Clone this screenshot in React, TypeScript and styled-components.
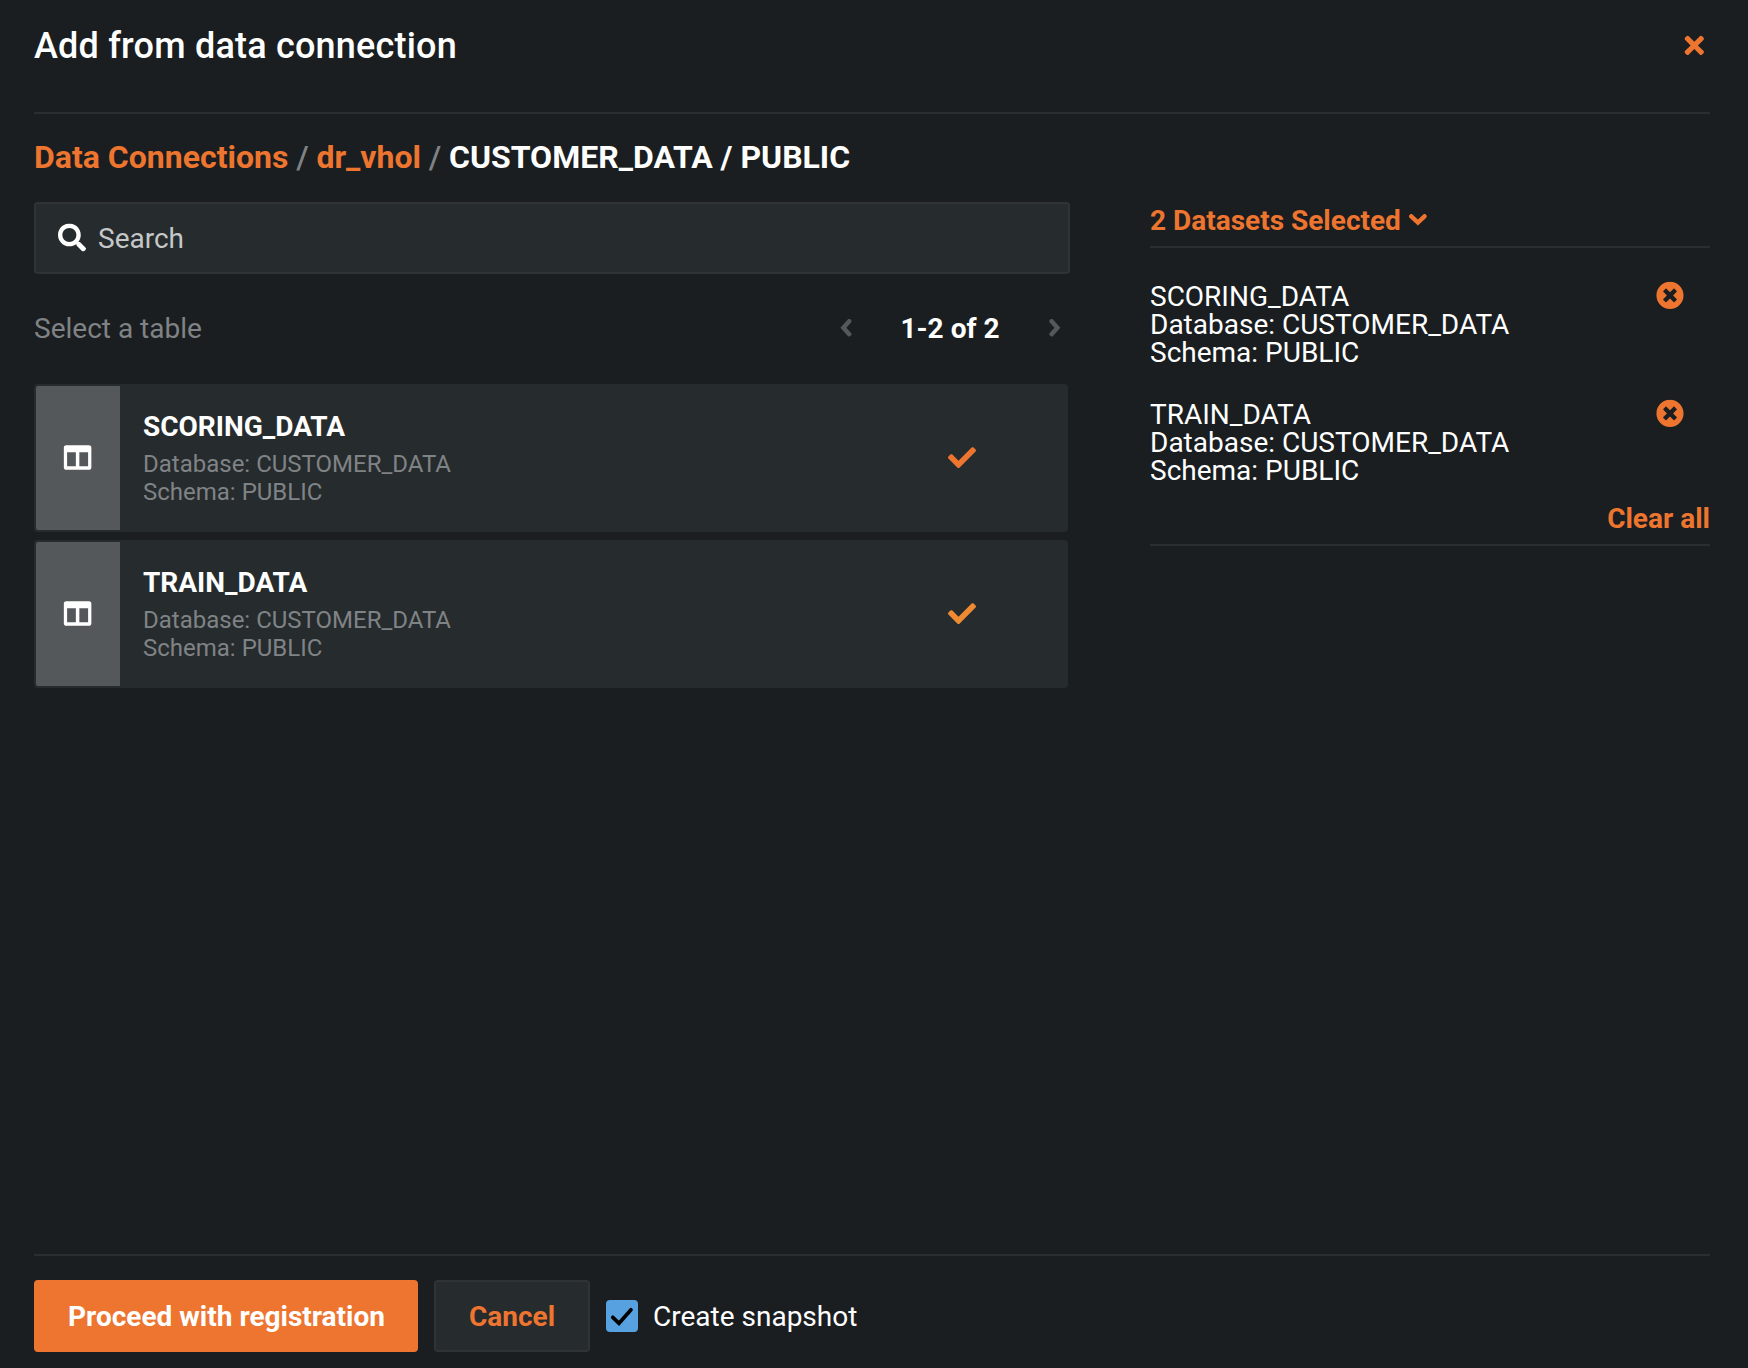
import React from 'react';
import styled, { createGlobalStyle } from 'styled-components';
import { FaCheck, FaColumns, FaSearch, FaTimes, FaTimesCircle } from 'react-icons/fa';

const color = {
  page: '#1a1e20',
  panel: '#262b2e',
  border: '#2f3335',
  rule: '#292e31',
  thumb: '#54585a',
  accent: '#ed752f',
  accentHover: '#ed8a32',
  text: '#ffffff',
  placeholder: '#c5c7c8',
  muted: '#808385',
  disabled: '#54585a',
  checkbox: '#58a1e0',
};

const GlobalStyle = createGlobalStyle`
  *, *::before, *::after { box-sizing: border-box; }
  body {
    margin: 0;
    background: ${color.page};
    color: ${color.text};
    font-family: Roboto, "Liberation Sans", sans-serif;
    font-size: 28px;
    line-height: 28px;
  }
  button { font: inherit; color: inherit; cursor: pointer; }
  svg { display: block; flex: none; }
`;

const Dialog = styled.div`
  display: flex;
  flex-direction: column;
  height: 1368px;
  padding: 0 38px 16px 34px;
`;

const Header = styled.header`
  display: flex;
  justify-content: space-between;
  height: 114px;
  padding: 24px 6px 0 0;
  border-bottom: 2px solid ${color.rule};
`;

const Title = styled.h1`
  margin: 0;
  font-size: 36px;
  font-weight: 500;
  letter-spacing: 0.2px;
  line-height: 44px;
`;

const IconButton = styled.button<{ $tone?: string }>`
  display: flex;
  align-items: center;
  justify-content: center;
  flex: none;
  height: 28px;
  padding: 0;
  border: 0;
  background: none;
  color: ${(p) => p.$tone ?? color.accent};
`;

const CloseButton = styled(IconButton)`
  width: 20px;
  height: 42px;
  svg { transform: translate(0.3px, 0.4px); }
`;

const RemoveButton = styled(IconButton)`
  margin-top: -2px;
  svg { transform: translateY(0.4px); }
`;

const PageButton = styled(IconButton)`
  width: 12px;
  margin-bottom: 3px;
`;

const Breadcrumbs = styled.nav`
  display: flex;
  gap: 7.75px;
  margin-top: 24px;
  font-size: 32px;
  font-weight: 700;
  line-height: 38px;
  white-space: pre;
`;

const CrumbLink = styled.a`
  color: ${color.accent};
`;

const CrumbDivider = styled.span`
  color: ${color.muted};
  font-weight: 500;
`;

const Body = styled.main`
  display: grid;
  grid-template-columns: 1036px 560px;
  justify-content: space-between;
  align-items: start;
  flex: 1;
  padding-top: 26px;
`;

const SearchField = styled.label`
  display: flex;
  align-items: center;
  gap: 12px;
  height: 72px;
  padding: 0 22px;
  border: 2px solid ${color.border};
  border-radius: 4px;
  background: ${color.panel};
  svg { transform: translateY(-0.4px); }
`;

const SearchInput = styled.input`
  flex: 1;
  min-width: 0;
  padding: 2px 0 0;
  border: 0;
  outline: 0;
  background: none;
  color: ${color.text};
  font: inherit;
  line-height: 34px;
  &::placeholder { color: ${color.placeholder}; opacity: 1; }
`;

const ListBar = styled.div`
  display: flex;
  align-items: center;
  justify-content: space-between;
  margin-top: 38px;
  padding-right: 9px;
  height: 34px;
`;

const Hint = styled.span`
  color: ${color.muted};
`;

const Pager = styled.div`
  display: flex;
  align-items: center;
  font-weight: 700;
`;

const PageRange = styled.span`
  margin: 0 49.5px 0 48.5px;
`;

const TableList = styled.ul`
  display: flex;
  flex-direction: column;
  gap: 8px;
  margin: 38px 2px 0 0;
  padding: 0;
  list-style: none;
`;

const TableRow = styled.li`
  display: flex;
  height: 148px;
  padding: 2px;
  border-radius: 4px;
  background: ${color.panel};
`;

const Thumb = styled.div`
  display: flex;
  align-items: center;
  justify-content: center;
  width: 84px;
  border-radius: 2px 0 0 2px;
  background: ${color.thumb};
  svg { transform: translate(-0.4px, -0.4px); }
`;

const TableInfo = styled.div`
  flex: 1;
  padding: 25px 0 0 23px;
`;

const TableName = styled.div`
  font-weight: 700;
  line-height: 32px;
  margin-bottom: 7px;
`;

const TableMeta = styled.div`
  color: ${color.muted};
  font-size: 24px;
  line-height: 28px;
`;

const SelectedMark = styled.div<{ $tone: string }>`
  display: flex;
  align-items: center;
  padding-right: 90px;
  color: ${(p) => p.$tone};
  svg { transform: translateY(-0.4px); }
`;

const Selection = styled.aside`
  display: flex;
  flex-direction: column;
`;

const SelectionToggle = styled.button`
  display: flex;
  align-items: center;
  gap: 8px;
  height: 46px;
  padding: 0 0 6px;
  border: 0;
  border-bottom: 2px solid ${color.rule};
  background: none;
  color: ${color.accent};
  font-weight: 700;
  svg { margin-bottom: 3px; }
`;

const SelectedItems = styled.div`
  display: flex;
  flex-direction: column;
  gap: 34px;
  padding-top: 35px;
`;

const SelectedItem = styled.div`
  display: flex;
  justify-content: space-between;
  padding-right: 26px;
`;

const SelectionFooter = styled.div`
  display: flex;
  justify-content: flex-end;
  margin-top: 20px;
  padding-bottom: 11px;
  border-bottom: 2px solid ${color.rule};
`;

const ClearButton = styled.button`
  padding: 0;
  border: 0;
  background: none;
  color: ${color.accent};
  font-weight: 700;
`;

const Footer = styled.footer`
  display: flex;
  align-items: center;
  gap: 16px;
  padding-top: 24px;
  border-top: 2px solid ${color.rule};
`;

const Button = styled.button<{ $primary?: boolean }>`
  width: ${(p) => (p.$primary ? 384 : 156)}px;
  height: 72px;
  padding: 2px 0 0 ${(p) => (p.$primary ? 1 : 0)}px;
  border: 2px solid ${(p) => (p.$primary ? color.accent : color.border)};
  border-radius: 4px;
  background: ${(p) => (p.$primary ? color.accent : color.panel)};
  color: ${(p) => (p.$primary ? color.text : color.accent)};
  font-weight: 700;
`;

const CheckField = styled.label`
  display: flex;
  align-items: center;
  gap: 15px;
`;

const CheckBox = styled.span`
  display: flex;
  width: 32px;
  height: 32px;
  border-radius: 4px;
  background: ${color.checkbox};
`;

const CheckLabel = styled.span`
  padding-top: 2px;
`;

const chevrons = {
  down: { width: 18, height: 12, d: 'M2.3 2.3L8.9 8.5L15.5 2.3' },
  left: { width: 12, height: 18, d: 'M9.2 2.2L3.4 8.7L9.2 15.2' },
  right: { width: 12, height: 18, d: 'M2.6 2.2L8.4 8.7L2.6 15.2' },
};

function Chevron({ to }: { to: keyof typeof chevrons }) {
  const { width, height, d } = chevrons[to];
  return (
    <svg width={width} height={height} viewBox={`0 0 ${width} ${height}`} fill="none">
      <path d={d} stroke="currentColor" strokeWidth="4.4" strokeLinecap="round" />
    </svg>
  );
}

const tables = [
  { name: 'SCORING_DATA', database: 'CUSTOMER_DATA', schema: 'PUBLIC', tone: color.accent },
  { name: 'TRAIN_DATA', database: 'CUSTOMER_DATA', schema: 'PUBLIC', tone: color.accentHover },
];

export default function App() {
  return (
    <>
      <GlobalStyle />
      <Dialog>
        <Header>
          <Title>Add from data connection</Title>
          <CloseButton aria-label="Close"><FaTimes /></CloseButton>
        </Header>
        <Breadcrumbs>
          <CrumbLink>Data Connections</CrumbLink>
          <CrumbDivider>/</CrumbDivider>
          <CrumbLink>dr_vhol</CrumbLink>
          <CrumbDivider>/</CrumbDivider>
          <span>CUSTOMER_DATA / PUBLIC</span>
        </Breadcrumbs>
        <Body>
          <section>
            <SearchField>
              <FaSearch />
              <SearchInput placeholder="Search" />
            </SearchField>
            <ListBar>
              <Hint>Select a table</Hint>
              <Pager>
                <PageButton $tone={color.disabled} aria-label="Previous page"><Chevron to="left" /></PageButton>
                <PageRange>1-2 of 2</PageRange>
                <PageButton $tone={color.disabled} aria-label="Next page"><Chevron to="right" /></PageButton>
              </Pager>
            </ListBar>
            <TableList>
              {tables.map((t) => (
                <TableRow key={t.name}>
                  <Thumb><FaColumns /></Thumb>
                  <TableInfo>
                    <TableName>{t.name}</TableName>
                    <TableMeta>Database: {t.database}</TableMeta>
                    <TableMeta>Schema: {t.schema}</TableMeta>
                  </TableInfo>
                  <SelectedMark $tone={t.tone}><FaCheck /></SelectedMark>
                </TableRow>
              ))}
            </TableList>
          </section>
          <Selection>
            <SelectionToggle>
              2 Datasets Selected
              <Chevron to="down" />
            </SelectionToggle>
            <SelectedItems>
              {tables.map((t) => (
                <SelectedItem key={t.name}>
                  <div>
                    <div>{t.name}</div>
                    <div>Database: {t.database}</div>
                    <div>Schema: {t.schema}</div>
                  </div>
                  <RemoveButton aria-label={`Remove ${t.name}`}><FaTimesCircle /></RemoveButton>
                </SelectedItem>
              ))}
            </SelectedItems>
            <SelectionFooter>
              <ClearButton>Clear all</ClearButton>
            </SelectionFooter>
          </Selection>
        </Body>
        <Footer>
          <Button $primary>Proceed with registration</Button>
          <Button>Cancel</Button>
          <CheckField>
            <CheckBox>
              <svg width="32" height="32" viewBox="0 0 32 32" fill="none">
                <path d="M6.8 17.3L13 23.3L25 9.8" stroke="#000" strokeWidth="3.7" strokeLinecap="round" />
              </svg>
            </CheckBox>
            <CheckLabel>Create snapshot</CheckLabel>
          </CheckField>
        </Footer>
      </Dialog>
    </>
  );
}
